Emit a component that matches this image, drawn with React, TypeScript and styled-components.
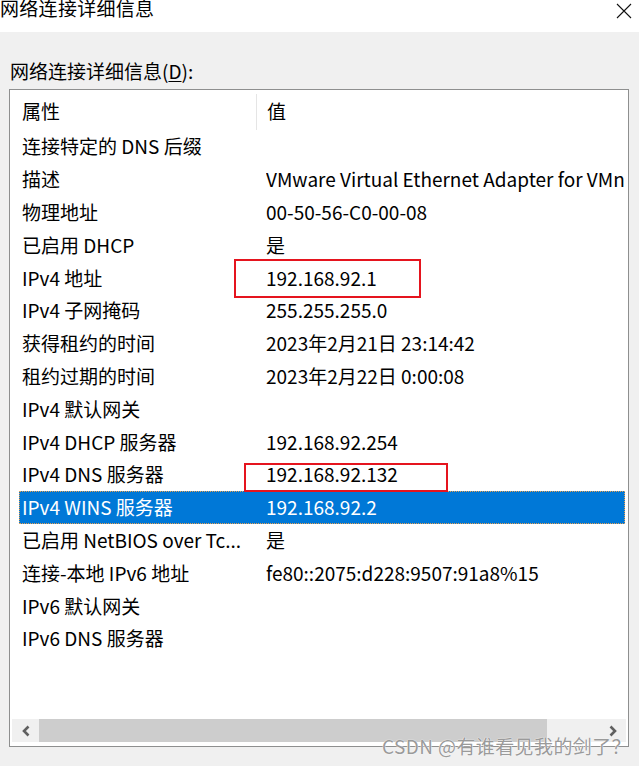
import React from "react";
import styled, { createGlobalStyle } from "styled-components";

const GlobalStyle = createGlobalStyle`
  html, body {
    margin: 0;
    padding: 0;
    background: #f0f0f0;
    font-family: "Noto Sans CJK SC", "Noto Sans", sans-serif;
    color: #000;
  }
  * {
    box-sizing: border-box;
  }
`;

const Window = styled.div`
  width: 639px;
  height: 766px;
  position: relative;
  overflow: hidden;
  background: #f0f0f0;
`;

const TitleBar = styled.div`
  height: 32px;
  background: #fff;
  display: flex;
  align-items: flex-start;
  justify-content: space-between;
`;

const Title = styled.div`
  font-size: 19px;
  line-height: 22px;
  margin-top: -3px;
  letter-spacing: 0.3px;
`;

const CloseButton = styled.div`
  width: 16px;
  height: 16px;
  margin: 3px 7px 0 0;
  display: flex;
`;

const Body = styled.div`
  padding: 28px 0 0 9px;
`;

const Label = styled.div`
  font-size: 19px;
  line-height: 22px;
  padding-left: 1px;
  margin-bottom: 7px;
  u {
    text-decoration: underline;
    text-underline-offset: 2px;
  }
`;

const ListBox = styled.div`
  width: 620px;
  height: 658px;
  border: 1px solid #8e8f8f;
  background: #fff;
  display: flex;
  flex-direction: column;
`;

const ListArea = styled.div`
  flex: 1;
  overflow: hidden;
  padding: 0 3px 0 9px;
`;

const HeaderRow = styled.div`
  display: grid;
  grid-template-columns: 237px 1fr;
  height: 40px;
  align-items: center;
  font-size: 19px;
`;

const HeaderCell = styled.div<{ $divider?: boolean }>`
  padding-left: ${(p) => (p.$divider ? "10px" : "3px")};
  height: 36px;
  margin-top: 4px;
  line-height: 34px;
  border-left: ${(p) => (p.$divider ? "1px solid #e5e5e5" : "none")};
`;

const Row = styled.div<{ $selected?: boolean }>`
  display: grid;
  grid-template-columns: 237px 1fr;
  height: 32.8px;
  align-items: center;
  font-size: 19px;
  line-height: 26px;
  white-space: nowrap;
  background: ${(p) => (p.$selected ? "#0078d7" : "transparent")};
  color: ${(p) => (p.$selected ? "#fff" : "#000")};
  outline: ${(p) => (p.$selected ? "1px dotted #e8a050" : "none")};
  outline-offset: -1px;
`;

const NameCell = styled.div`
  padding-left: 3px;
`;

const ValueCell = styled.div`
  position: relative;
  padding-left: 10px;
  min-width: 0;
`;

const ValueText = styled.span`
  display: block;
  overflow: hidden;
  white-space: nowrap;
`;

const RedMark = styled.div<{ $left: number; $top: number; $w: number; $h: number }>`
  position: absolute;
  left: ${(p) => p.$left}px;
  top: ${(p) => p.$top}px;
  width: ${(p) => p.$w}px;
  height: ${(p) => p.$h}px;
  border: 2px solid #e5141e;
  z-index: 2;
  pointer-events: none;
`;

const ScrollBar = styled.div`
  height: 23px;
  margin: 0 2px 4px 2px;
  background: #f0f0f0;
  display: flex;
  align-items: stretch;
`;

const ArrowButton = styled.div`
  width: 27px;
  display: flex;
  align-items: center;
  justify-content: center;
`;

const Track = styled.div`
  flex: 1;
  display: flex;
  align-items: stretch;
  padding-right: 52px;
`;

const Thumb = styled.div`
  flex: 1;
  background: #cdcdcd;
`;

const Watermark = styled.div`
  position: absolute;
  right: 8px;
  bottom: 8px;
  font-size: 19px;
  line-height: 24px;
  color: #9a9a9a;
  text-shadow: 0 0 1px #fff, 0 0 1px #fff;
  letter-spacing: 0.4px;
`;

interface DetailRow {
  name: string;
  value: string;
  selected?: boolean;
  mark?: { left: number; top: number; w: number; h: number };
}

const rows: DetailRow[] = [
  { name: "连接特定的 DNS 后缀", value: "" },
  { name: "描述", value: "VMware Virtual Ethernet Adapter for VMnet8" },
  { name: "物理地址", value: "00-50-56-C0-00-08" },
  { name: "已启用 DHCP", value: "是" },
  {
    name: "IPv4 地址",
    value: "192.168.92.1",
    mark: { left: -22, top: -6, w: 187, h: 39 },
  },
  { name: "IPv4 子网掩码", value: "255.255.255.0" },
  { name: "获得租约的时间", value: "2023年2月21日 23:14:42" },
  { name: "租约过期的时间", value: "2023年2月22日 0:00:08" },
  { name: "IPv4 默认网关", value: "" },
  { name: "IPv4 DHCP 服务器", value: "192.168.92.254" },
  {
    name: "IPv4 DNS 服务器",
    value: "192.168.92.132",
    mark: { left: -12, top: 2, w: 204, h: 29 },
  },
  { name: "IPv4 WINS 服务器", value: "192.168.92.2", selected: true },
  { name: "已启用 NetBIOS over Tc...", value: "是" },
  { name: "连接-本地 IPv6 地址", value: "fe80::2075:d228:9507:91a8%15" },
  { name: "IPv6 默认网关", value: "" },
  { name: "IPv6 DNS 服务器", value: "" },
];

const Chevron = ({ dir }: { dir: "left" | "right" }) => (
  <svg width="10" height="12" viewBox="0 0 10 12">
    <path
      d={dir === "left" ? "M7.5 1.5 L3 6 L7.5 10.5" : "M2.5 1.5 L7 6 L2.5 10.5"}
      fill="none"
      stroke="#606060"
      strokeWidth="2.6"
    />
  </svg>
);

const App = () => {
  return (
    <Window>
      <GlobalStyle />
      <TitleBar>
        <Title>网络连接详细信息</Title>
        <CloseButton>
          <svg width="16" height="16" viewBox="0 0 16 16">
            <path d="M1 1 L15 15 M15 1 L1 15" stroke="#111" strokeWidth="1.1" />
          </svg>
        </CloseButton>
      </TitleBar>
      <Body>
        <Label>
          网络连接详细信息(<u>D</u>):
        </Label>
        <ListBox>
          <ListArea>
            <HeaderRow>
              <HeaderCell>属性</HeaderCell>
              <HeaderCell $divider>值</HeaderCell>
            </HeaderRow>
            {rows.map((row) => (
              <Row key={row.name} $selected={row.selected}>
                <NameCell>{row.name}</NameCell>
                <ValueCell>
                  <ValueText>{row.value}</ValueText>
                  {row.mark && (
                    <RedMark
                      $left={row.mark.left}
                      $top={row.mark.top}
                      $w={row.mark.w}
                      $h={row.mark.h}
                    />
                  )}
                </ValueCell>
              </Row>
            ))}
          </ListArea>
          <ScrollBar>
            <ArrowButton>
              <Chevron dir="left" />
            </ArrowButton>
            <Track>
              <Thumb />
            </Track>
            <ArrowButton>
              <Chevron dir="right" />
            </ArrowButton>
          </ScrollBar>
        </ListBox>
      </Body>
      <Watermark>CSDN @有谁看见我的剑了？</Watermark>
    </Window>
  );
};

export default App;
